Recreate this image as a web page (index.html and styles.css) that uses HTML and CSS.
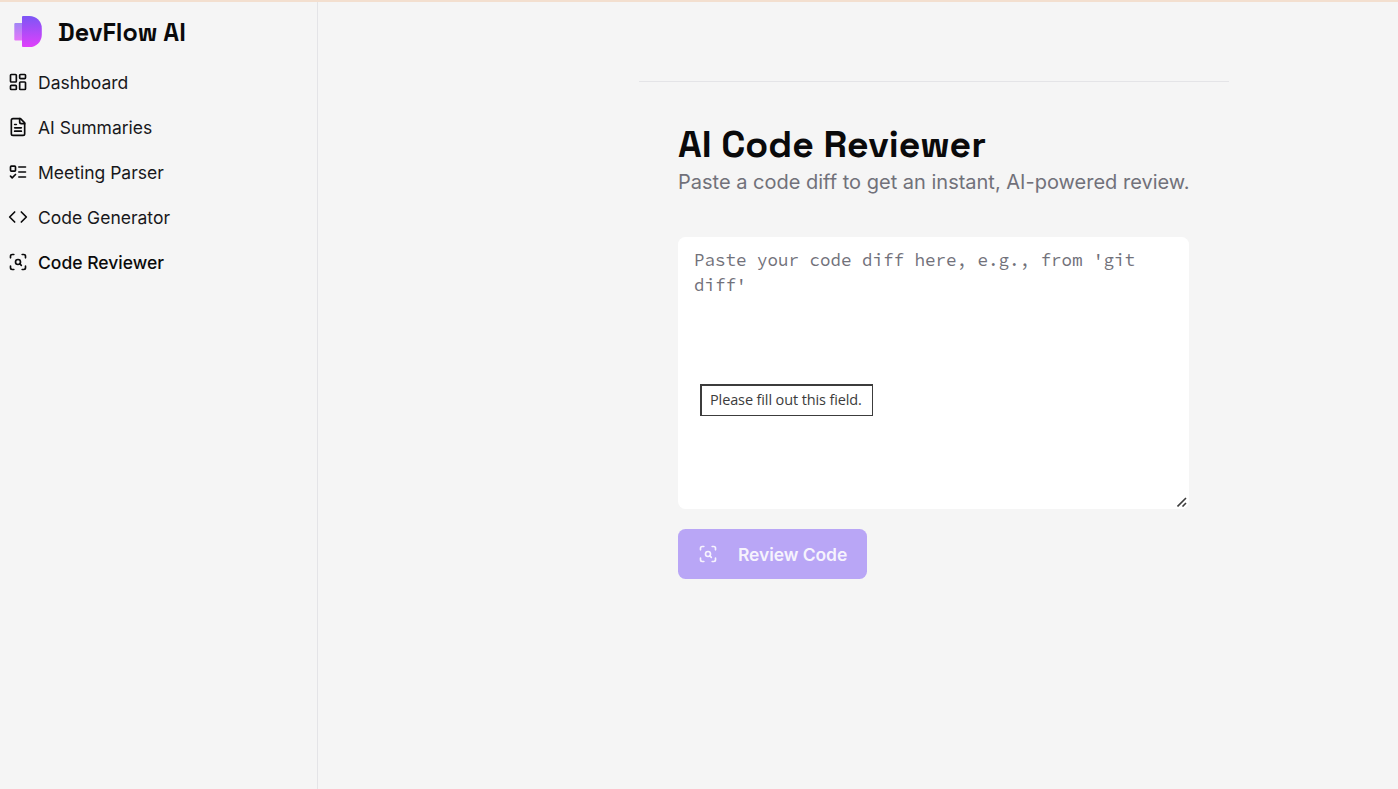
FILE: index.html
```html
<!DOCTYPE html>
<html lang="en">
<head>
    <title>DevFlow AI</title>
    <meta charset="utf-8">
    <meta name="viewport" content="width=device-width, initial-scale=1.0">
    <link rel="stylesheet" href="styles.css">
</head>
<body>
    <div class="layout">
        <aside class="sidebar">
            <div class="brand">
                <svg class="logo" viewBox="0 0 28 31">
                    <defs>
                        <linearGradient id="logo-fill" x1="0" y1="0" x2="0" y2="1">
                            <stop offset="0" stop-color="#7c56f5"/>
                            <stop offset="1" stop-color="#e040fb"/>
                        </linearGradient>
                    </defs>
                    <rect x="0.3" y="7" width="12" height="17.6" rx="1" fill="url(#logo-fill)" opacity="0.7"/>
                    <path d="M9 0h6.500a12.300 12.300 0 0 1 12.300 12.300v6.400a12.300 12.300 0 0 1-12.300 12.300H9a1 1 0 0 1-1-1V1a1 1 0 0 1 1-1z" fill="url(#logo-fill)"/>
                </svg>
                <span class="brand-name">DevFlow AI</span>
            </div>
            <nav class="menu">
                <a href="#" class="menu-item">
                    <svg class="icon" viewBox="0 0 24 24"><rect width="7" height="9" x="3" y="3" rx="1"/><rect width="7" height="5" x="14" y="3" rx="1"/><rect width="7" height="9" x="14" y="12" rx="1"/><rect width="7" height="5" x="3" y="16" rx="1"/></svg>
                    <span>Dashboard</span>
                </a>
                <a href="#" class="menu-item">
                    <svg class="icon" viewBox="0 0 24 24"><path d="M15 2H6a2 2 0 0 0-2 2v16a2 2 0 0 0 2 2h12a2 2 0 0 0 2-2V7Z"/><path d="M14 2v4a2 2 0 0 0 2 2h4"/><path d="M10 9H8"/><path d="M16 13H8"/><path d="M16 17H8"/></svg>
                    <span>AI Summaries</span>
                </a>
                <a href="#" class="menu-item">
                    <svg class="icon" viewBox="0 0 24 24"><rect x="3" y="5" width="6" height="6" rx="1"/><path d="m3 17 2 2 4-4"/><path d="M13 6h8"/><path d="M13 12h8"/><path d="M13 18h8"/></svg>
                    <span>Meeting Parser</span>
                </a>
                <a href="#" class="menu-item">
                    <svg class="icon" viewBox="0 0 24 24"><path d="m16 18 6-6-6-6"/><path d="m8 6-6 6 6 6"/></svg>
                    <span>Code Generator</span>
                </a>
                <a href="#" class="menu-item active">
                    <svg class="icon" viewBox="0 0 24 24"><path d="M3 7V5a2 2 0 0 1 2-2h2"/><path d="M17 3h2a2 2 0 0 1 2 2v2"/><path d="M21 17v2a2 2 0 0 1-2 2h-2"/><path d="M7 21H5a2 2 0 0 1-2-2v-2"/><circle cx="12" cy="12" r="3"/><path d="m16 16-1.900-1.900"/></svg>
                    <span>Code Reviewer</span>
                </a>
            </nav>
        </aside>

        <main class="main">
            <section class="page">
                <h1>AI Code Reviewer</h1>
                <p class="subtitle">Paste a code diff to get an instant, AI-powered review.</p>
                <form class="review-form">
                    <div class="field">
                        <textarea class="diff-input" required placeholder="Paste your code diff here, e.g., from 'git diff'"></textarea>
                        <svg class="resizer" viewBox="0 0 10 10"><path d="M0.500 9.500l8.500-8.500M5.500 9.500l3.500-3.500"/></svg>
                        <div class="tooltip">Please fill out this field.</div>
                    </div>
                    <button type="submit" class="btn" disabled>
                        <svg class="icon" viewBox="0 0 24 24"><path d="M3 7V5a2 2 0 0 1 2-2h2"/><path d="M17 3h2a2 2 0 0 1 2 2v2"/><path d="M21 17v2a2 2 0 0 1-2 2h-2"/><path d="M7 21H5a2 2 0 0 1-2-2v-2"/><circle cx="12" cy="12" r="3"/><path d="m16 16-1.900-1.900"/></svg>
                        <span>Review Code</span>
                    </button>
                </form>
            </section>
        </main>
    </div>
</body>
</html>
```
FILE: styles.css
```css
* {
    box-sizing: border-box;
}
body {
    font-family: Inter, "Liberation Sans", sans-serif;
    background: #f5f5f5;
    color: #0a0a0b;
    margin: 0;
    border-top: 2px solid #f3dfcf;
    height: 100vh;
    overflow: hidden;
}
.layout {
    display: flex;
    height: 100%;
}
.sidebar {
    width: 318px;
    flex-shrink: 0;
    border-right: 1px solid #e4e4e7;
}
.brand {
    display: flex;
    align-items: center;
    gap: 16px;
    height: 60px;
    padding: 0 0 1px 14px;
}
.logo {
    width: 28px;
    height: 31px;
}
.brand-name {
    font-family: "Space Grotesk", Inter, sans-serif;
    font-size: 25px;
    font-weight: 700;
}
.menu {
    display: flex;
    flex-direction: column;
    gap: 5px;
}
.menu-item {
    display: flex;
    align-items: center;
    gap: 10px;
    height: 40px;
    padding: 0 8px;
    color: #18181b;
    font-size: 17.5px;
    text-decoration: none;
}
.menu-item .icon {
    color: #0a0a0b;
}
.menu-item.active {
    color: #0a0a0b;
    font-weight: 500;
}
.icon {
    width: 20px;
    height: 20px;
    flex-shrink: 0;
    fill: none;
    stroke: currentColor;
    stroke-width: 2;
    stroke-linecap: round;
    stroke-linejoin: round;
}
.main {
    flex: 1;
    padding: 79px 0 0 321px;
}
.page {
    width: 590px;
    padding: 40px 40px 40px 39px;
    border-top: 1px solid #e4e4e7;
}
h1 {
    font-family: "Space Grotesk", Inter, sans-serif;
    font-size: 37.5px;
    font-weight: 700;
    line-height: 45px;
    margin: 0;
    white-space: nowrap;
}
.subtitle {
    color: #71717a;
    font-size: 20px;
    line-height: 30px;
    margin: 0 0 40px;
    white-space: nowrap;
}
.field {
    position: relative;
    height: 272px;
    margin-bottom: 20px;
}
.diff-input {
    display: block;
    width: 100%;
    height: 100%;
    padding: 11px 16px;
    background: white;
    border: none;
    border-radius: 7.5px;
    font-family: "Source Code Pro", "Liberation Mono", monospace;
    font-size: 17.5px;
    line-height: 25px;
    resize: none;
}
.diff-input::placeholder {
    color: #71717a;
}
.resizer {
    position: absolute;
    right: 2px;
    bottom: 2px;
    width: 10px;
    height: 10px;
    stroke: #3c3c3c;
    stroke-width: 1.6;
}
.tooltip {
    position: absolute;
    left: 22px;
    top: 147px;
    width: 173px;
    height: 32px;
    padding-left: 8px;
    background: white;
    border: 1px solid #3c3c3c;
    border-width: 2px 1px 1px 2px;
    color: #3c3c3c;
    font-family: "Segoe UI", "Open Sans", sans-serif;
    font-size: 14.5px;
    letter-spacing: -0.12px;
    line-height: 28px;
    white-space: nowrap;
}
.btn {
    display: flex;
    align-items: center;
    gap: 20px;
    height: 50px;
    padding: 0 20px;
    background: #b9a6f6;
    border: none;
    border-radius: 7.5px;
    color: #f6f3fd;
    font-family: inherit;
    font-size: 17.5px;
    font-weight: 600;
    letter-spacing: -0.08px;
}
```
